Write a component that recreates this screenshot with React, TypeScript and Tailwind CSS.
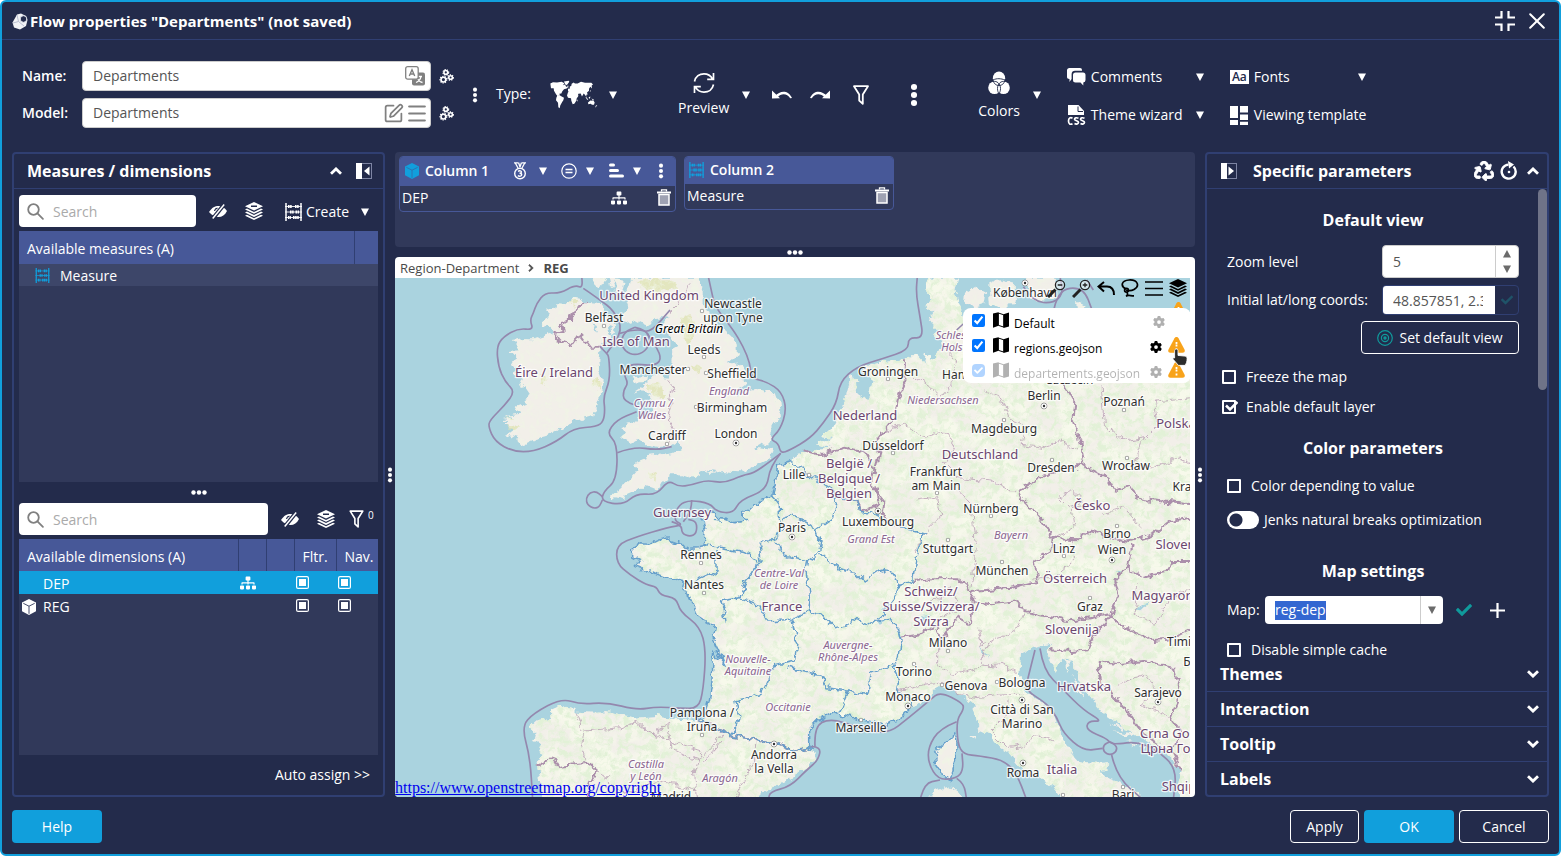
import React from "react";
import { FaRecycle, FaSitemap, FaChevronRight, FaCheck } from "react-icons/fa";
import { FaGear } from "react-icons/fa6";
import { SquarePen } from "lucide-react";

type P = { className?: string };

/* ---------- small icons ---------- */

const Caret = ({ className = "text-white" }: P) => (
  <svg viewBox="0 0 8 8" className={"h-2 w-2 shrink-0 " + className} fill="currentColor"><path d="M0 0.5h8L4 8z" /></svg>
);
const CaretUp = ({ className = "" }: P) => (
  <svg viewBox="0 0 8 8" className={"h-2 w-2 " + className} fill="currentColor"><path d="M0 7.5h8L4 0z" /></svg>
);
const Chevron = ({ className = "" }: P) => (
  <svg viewBox="0 0 12 8" className={"h-2 w-3 " + className} fill="none" stroke="white" strokeWidth="2.800"><path d="M1 6.800 6 1.900l5 4.900" /></svg>
);
const Cube = ({ className = "", line = "#31395a" }: P & { line?: string }) => (
  <svg viewBox="0 0 14 16" className={"h-4 w-3.5 " + className}>
    <path d="M7 0l7 3.600v8.600L7 16l-7-3.800V3.600z" fill="currentColor" />
    <path d="M1.300 4.300 7 7.200l5.700-2.900M7 7.200v7.600" fill="none" stroke={line} strokeWidth=".9" />
  </svg>
);
const DotsV = ({ className = "h-4 w-1.5" }: P) => (
  <svg viewBox="0 0 6 18" className={"shrink-0 " + className} fill="white">
    <circle cx="3" cy="3" r="2.3" /><circle cx="3" cy="9" r="2.3" /><circle cx="3" cy="15" r="2.3" />
  </svg>
);
const DotsH = () => (
  <svg viewBox="0 0 16 5" className="h-[5px] w-4" fill="white">
    <circle cx="2.5" cy="2.5" r="2.2" /><circle cx="8" cy="2.5" r="2.2" /><circle cx="13.5" cy="2.5" r="2.2" />
  </svg>
);
const Logo = () => (
  <svg viewBox="0 0 16 17" className="h-[17px] w-4">
    <path d="M5 1.500 9 .5l5 2.500 1.500 4-1.500 6-6 3.500-6-2L.5 9.500z" fill="#f1f2f5" />
    <path d="M5 2 6.500 8.500 1 10M6.500 8.500 12 13" stroke="#b9bfd0" strokeWidth="1" fill="none" />
    <circle cx="11.500" cy="6" r="3.300" fill="#232b4b" stroke="#dfe2ea" strokeWidth="1" />
  </svg>
);
const Gears = () => (
  <svg viewBox="0 0 15 15" className="h-[15px] w-[15px]" fill="none" stroke="white">
    {[[6.8, 3.4, 1.9], [4.4, 10.6, 2.4], [11.6, 8.5, 1.8]].map(([x, y, r]) => (
      <g key={x}>
        <circle cx={x} cy={y} r={r} strokeWidth="1.600" />
        <circle cx={x} cy={y} r={r + 1} strokeWidth="1.100" strokeDasharray="1.300 1.100" />
      </g>
    ))}
  </svg>
);
const Translate = () => (
  <svg viewBox="0 0 20 20" className="h-5 w-5">
    <rect x="7" y="6.500" width="13" height="13" rx="2" fill="#808080" />
    <path d="M11 10.500h6M16 10.500c-.5 3-2.500 5-5 6M12 12c1 2 3 4 5.500 4.500" stroke="white" strokeWidth="1.300" fill="none" />
    <rect x=".7" y=".7" width="12.500" height="12.500" rx="2" fill="white" stroke="#808080" strokeWidth="1.300" />
    <path d="M4.300 10 7 3.800 9.700 10M5.200 8h3.600" stroke="#808080" strokeWidth="1.400" fill="none" />
  </svg>
);
const List = () => (
  <svg viewBox="0 0 18 17" className="h-[17px] w-[18px]" stroke="#808080" strokeWidth="2.200" strokeLinecap="round"><path d="M1.200 1.500h15.600M1.200 8.500h15.600M1.200 15.500h15.600" /></svg>
);
const WorldMap = () => (
  <svg viewBox="30 46 144 86" className="h-[29px] w-12" fill="white">
    <path d="M31 56l8-4 12 1 14-2 8 4-4 6 6-2 3 6 6 3-4 3-8 2-5 6-3 7-6 1 2 5-5-1 2 4 6 2 3 3-4 0-9-6-5-6-6-10-1-8-8 0z" />
    <path d="M52 92l7-1 6 4 7 4-2 7-3 5-3 5-3 5-2 9-4-3-1-13-6-8 1-7zM72 50l14-2 2 3-6 8-4 2-4-6z" />
    <path d="M84 82l8-3 6 2 7 1 4 9 7 1-6 9-1 7-6 9-5 1-4-10-1-8-9-1-3-7z" />
    <path d="M84 79l0-7 6-1-1-5 5-3 1-6 6-4 4 3 8 0 10-5 12 3 19 0 5 5-4 3 1 9-5-5-4 6 0 6-6 5 2 6-4 1 0 6-5-7-3-3-5 9-4-9-7 1-2 8-7 2-6-11-4-2-4 2zM82 63l3-1 0 6-3 0z" />
    <path d="M136 96l5 3 4 7-4-2zM146 97l5-2-1 6-3 0zM154 101l8 3-3 2zM144 113l7-6 6 1 2-3 5 8-2 7-6 0-4-3-7 1zM168 121l4 1-7 7zM149 80l3-5 0 5zM110 106l3-2-1 7z" />
  </svg>
);
const Refresh = () => (
  <svg viewBox="0 0 22 22" className="h-[22px] w-[22px]" fill="none" stroke="white" strokeWidth="1.700">
    <path d="M1.500 9.500C2.500 4.500 6.500 1.800 11 1.800c3.700 0 6.700 1.800 8.500 5M20.500 1v6.300h-6.300M20.500 12.500c-1 5-5 7.700-9.500 7.700-3.700 0-6.700-1.800-8.500-5M1.500 21v-6.300h6.300" />
  </svg>
);
const Undo = ({ className = "" }: P) => (
  <svg viewBox="0 0 20 10" className={"h-[10px] w-5 " + className} fill="white">
    <path d="M0 .5 8 8.200 0 8.500zM3 6C8 .5 16-.5 20 8l-1.800.3C15 3 9 3 5.500 7.500z" />
  </svg>
);
const Funnel = ({ className = "h-5 w-4" }: P) => (
  <svg viewBox="0 0 16 20" className={className} fill="none" stroke="white" strokeWidth="1.800" strokeLinejoin="round">
    <path d="M1 1.200h14L9.800 9.500V18.800L6.200 15.500V9.500z" />
  </svg>
);
const Colors = () => (
  <svg viewBox="0 0 22 24" className="h-6 w-[22px]">
    <circle cx="6.500" cy="16.800" r="6.300" fill="white" /><circle cx="15.500" cy="16.800" r="6.300" fill="white" /><ellipse cx="11" cy="7.500" rx="6.200" ry="7" fill="white" />
    <g fill="none" stroke="#232b4b" strokeWidth=".9">
      <path d="M5.500 10.500c3-.8 7 2 7 7 0 2.500-.8 4-1.500 5.500M16.500 10.500c-3-.8-7 2-7 7 0 2.500.8 4 1.500 5.500M5 8.500c.5 4 3 6 6 6s5.500-2 6-6M5 9c4-2 8-1.500 12 0" />
    </g>
  </svg>
);
const Comments = () => (
  <svg viewBox="0 0 19 18" className="h-[18px] w-[19px]" fill="white">
    <path d="M2.500 0h10.500a2 2 0 0 1 2 2v.8H8A3.500 3.500 0 0 0 4.600 6v5L2.500 14V11C.8 11 0 10 0 9V2.500A2.500 2.500 0 0 1 2.500 0z" />
    <path d="M8.500 4.500H16A2.500 2.500 0 0 1 18.500 7v5A2.500 2.500 0 0 1 16.300 14.500v3L13.500 14.500h-5A2.500 2.500 0 0 1 6 12V7a2.500 2.500 0 0 1 2.500-2.500z" />
  </svg>
);
const CssDoc = () => (
  <svg viewBox="0 0 19 20" className="h-5 w-[19px]" fill="none" stroke="white" strokeWidth="1.700">
    <path d="M1 0h10.500l5.500 6v4H1z" fill="white" stroke="none" /><path d="M11 1.500V6.500h5" stroke="#232b4b" strokeWidth="1" />
    <path d="M5.500 13.300C3.500 12 1.500 13 1.500 16s2 4 4 2.700M11.500 13.300c-2-1-4-.5-4 1s4 1.500 4 3-2 2.300-4 1.300M17.500 13.300c-2-1-4-.5-4 1s4 1.500 4 3-2 2.300-4 1.300" />
  </svg>
);
const Template = () => (
  <svg viewBox="0 0 18 19" className="h-[19px] w-[18px]" fill="white">
    <path d="M0 0h8v12H0zM0 14h8v5H0zM10 0h8v6.500h-8zM10 8.500h8V14h-8zM10 15.700h8V19h-8z" />
  </svg>
);
const Compress = () => (
  <svg viewBox="0 0 20 20" className="h-5 w-5" fill="none" stroke="white" strokeWidth="2.200">
    <path d="M0 6.500h6.500V0M20 6.500h-6.500V0M0 13.500h6.500V20M20 13.500h-6.500V20" />
  </svg>
);
const Close = () => (
  <svg viewBox="0 0 16 16" className="h-4 w-4" stroke="white" strokeWidth="2" strokeLinecap="round"><path d="M1.200 1.200 14.800 14.800M14.800 1.200 1.200 14.800" /></svg>
);
const Dock = ({ open = false }: { open?: boolean }) => (
  <svg viewBox="0 0 16 16" className="h-4 w-4">
    <rect x=".5" y=".5" width="15" height="15" fill="none" stroke="#7d84a3" strokeWidth="1" />
    <path d="M0 0h6v16H0z" fill="white" /><path d={open ? "M7.500 3.500v9L13 8z" : "M13.500 3.500v9L8 8z"} fill="white" />
  </svg>
);
const SearchIcon = () => (
  <svg viewBox="0 0 17 17" className="h-[17px] w-[17px] shrink-0" fill="none" stroke="#808080" strokeWidth="1.800" strokeLinecap="round">
    <circle cx="6.500" cy="6.500" r="5.300" /><path d="m10.700 10.700 5.200 5.200" />
  </svg>
);
const Hidden = () => (
  <svg viewBox="0 0 18 15" className="h-[15px] w-[18px]">
    <path d="M0 8C3 3.500 6 2 9.500 2S15.500 3.500 18 7c-2 4-5 6-8.500 6S3 11.500 0 8z" fill="white" />
    <path d="M5.500 7a3.500 3.500 0 0 1 3-2.800" stroke="#232b4b" strokeWidth="1.200" fill="none" />
    <path d="M3.500 15 15.500 0" stroke="#232b4b" strokeWidth="4" /><path d="M3.700 14.500 15.200.5" stroke="white" strokeWidth="1.500" />
  </svg>
);
const Layers = ({ hole = true }: { hole?: boolean }) => (
  <svg viewBox="0 0 18 18" className="h-[18px] w-[18px]" fill="currentColor">
    <path fillRule="evenodd" d={hole ? "M9 0l9 4.300-9 4.300L0 4.300zM6 3.500v1.500h6V3.500z" : "M9 0l9 4.300-9 4.300L0 4.300z"} />
    <path d="M0 7.500l2-1L9 10l7-3.500 2 1-9 4.300zM0 10.600l2-1 7 3.500 7-3.500 2 1-9 4.300zM0 13.700l2-1 7 3.500 7-3.500 2 1L9 18z" />
  </svg>
);
const Abacus = ({ className = "h-[18px] w-[17px] text-white" }: P) => (
  <svg viewBox="0 0 17 18" className={className} fill="none" stroke="currentColor">
    <path d="M1 0v18M16 0v18" strokeWidth="1.500" /><path d="M0 3.500h17M0 9h17M0 14.500h17" strokeWidth=".9" />
    <path d="M3 3.500h4M10 3.500h4M5 9h4M10.500 9h3.500M3 14.500h3M8 14.500h6" strokeWidth="3.200" strokeDasharray="1.600 .5" />
  </svg>
);
const Medal = () => (
  <svg viewBox="0 0 14 18" className="h-[18px] w-3.5" fill="none" stroke="white">
    <path d="M2 .5 5 6M5.500.5 7 5M12 .5 9 6M8.500.5 7 5M1 .8h4M9 .8h4" strokeWidth="1.300" />
    <circle cx="7" cy="11.500" r="5.300" strokeWidth="1.400" />
    <path d="M5 9.300c1.500-1 3.600-.5 3.400.8-.1.900-1 1.200-1.900 1.200 1.200 0 2.200.4 2.200 1.400 0 1.500-2.300 2-3.900.9" strokeWidth="1.400" />
  </svg>
);
const EqualCircle = () => (
  <svg viewBox="0 0 16 16" className="h-4 w-4" fill="none" stroke="white"><circle cx="8" cy="8" r="7.200" strokeWidth="1.200" /><path d="M4.500 6.500h7M4.500 9.500h7" strokeWidth="1.300" /></svg>
);
const SortBars = () => (
  <svg viewBox="0 0 15 15" className="h-[15px] w-[15px]" stroke="white" strokeWidth="3" strokeLinecap="round"><path d="M1.500 2h3M1.500 7.500h7M1.500 13h12" /></svg>
);
const Trash = () => (
  <svg viewBox="0 0 14 17" className="h-[17px] w-3.5" fill="none" stroke="white">
    <rect x="2" y="5.500" width="10" height="10.500" strokeWidth="1.500" fill="#9ea1b2" /><path d="M0 3.500h14" strokeWidth="2" /><path d="M4.500 2.500V.8h5v1.700" strokeWidth="1.300" />
  </svg>
);
const Reset = () => (
  <svg viewBox="0 0 18 19" className="h-[19px] w-[18px]" fill="none" stroke="white" strokeWidth="2.400">
    <path d="M13.500 5.500A7 7 0 1 1 8.500 3.600" /><path d="M8 0l6 3.600-5 4z" fill="white" stroke="none" /><circle cx="9" cy="11" r="1.300" fill="white" stroke="none" />
  </svg>
);
const MapFold = ({ className = "" }: P) => (
  <svg viewBox="0 0 16 16" className={"h-4 w-4 shrink-0 " + className} fill="currentColor">
    <path d="M0 1.500 5.500.3v13.500L0 15.700zM10.500 2.200 16 .5v14l-5.500 1.400z" /><path d="M5.300 1 10.800 2.800v12.300L5.300 13.300z" fill="none" stroke="currentColor" strokeWidth="1" />
  </svg>
);
const Warning = () => (
  <svg viewBox="0 0 17 16" className="h-4 w-[17px]">
    <path d="M8.500 0c.9 0 1.500.4 2 1.300l6 11.300c.8 1.700 0 3.200-1.900 3.200H2.400C.5 15.800-.3 14.300.5 12.600l6-11.300C7 .4 7.600 0 8.500 0z" fill="#f8a31b" />
    <path d="M8.500 5v5M8.500 11.500v2" stroke="white" strokeWidth="1.800" strokeDasharray="2 .5" />
  </svg>
);
const Pointer = () => (
  <svg viewBox="0 0 15 17" className="h-[18px] w-4">
    <path d="M4 1c1 0 1.600.6 1.600 1.600V7l6 .6c1.700.2 2.600 1 2.600 2.500 0 3-.8 4.200-1.800 6.300H6L1 10.700c-.7-.9.5-2 1.400-1.300V2.600C2.400 1.600 3 1 4 1z" fill="#2c2c2c" stroke="white" strokeWidth=".8" />
  </svg>
);
const Magnifier = ({ plus = false }: { plus?: boolean }) => (
  <svg viewBox="0 0 19 19" className="h-[19px] w-[19px]" fill="none" stroke="#222">
    <path d="M1 18 8.500 10.500" strokeWidth="3" /><circle cx="13" cy="6" r="4.600" strokeWidth="1.300" fill="#ffffff80" />
    <path d={plus ? "M10.700 6h4.600M13 3.700v4.600" : "M10.700 6h4.600"} strokeWidth="1.300" />
  </svg>
);
const MapUndo = () => (
  <svg viewBox="0 0 18 15" className="h-[15px] w-[18px]" fill="none" stroke="black" strokeWidth="2"><path d="M7 1 1.500 5.500 7 10.500M1.500 5.500H10c4 0 7 2 7 8.500" /></svg>
);
const Lasso = () => (
  <svg viewBox="0 0 18 18" className="h-[18px] w-[18px]" fill="none" stroke="black" strokeWidth="1.700">
    <path d="M5 10C-1 7 .5 1.500 8 1c9-.5 11 6 5 9.500-3 1.700-5.500 1.500-8 .5" /><circle cx="5.500" cy="11.300" r="1.900" /><path d="M6 13.200c1 2 .5 3.300-1 4 2-1.500 4-.4 8-.4" />
  </svg>
);
const Burger = () => (
  <svg viewBox="0 0 18 15" className="h-[15px] w-[18px]" stroke="black" strokeWidth="1.500"><path d="M0 1h18M0 7.500h18M0 14h18" /></svg>
);
const RadioSquare = () => (
  <svg viewBox="0 0 13 13" className="h-[13px] w-[13px]"><rect x=".6" y=".6" width="11.800" height="11.800" rx="1.500" fill="none" stroke="white" strokeWidth="1.200" /><rect x="3" y="3" width="7" height="7" fill="white" /></svg>
);
const Target = () => (
  <svg viewBox="0 0 16 16" className="h-4 w-4" fill="none" stroke="#109a9c" strokeWidth="1.200"><circle cx="8" cy="8" r="7.300" /><circle cx="8" cy="8" r="3.600" /><circle cx="8" cy="8" r="1.100" fill="#109a9c" /></svg>
);

/* ---------- map ---------- */

const IRELAND = "M545 140 570 145 585 155 630 160 640 180 665 215 675 245 655 265 635 275 625 300 622 330 625 360 635 385 630 430 615 470 610 495 570 505 530 520 500 540 465 555 430 565 395 582 375 575 385 562 345 550 365 535 340 520 355 515 335 508 368 500 345 492 388 485 375 465 402 455 418 428 400 402 385 405 395 380 370 375 388 350 360 340 372 320 355 300 388 298 360 270 400 265 430 265 460 255 490 245 470 225 452 220 478 190 468 180 500 160 520 162Z";
const BRITAIN = "M718 80 712 110 700 130 712 165 695 200 715 215 735 208 760 222 790 205 822 200 838 188 822 212 808 235 845 262 860 290 843 300 845 330 840 365 830 380 790 375 768 385 765 400 725 430 760 415 776 430 792 455 785 480 760 495 725 515 688 525 702 545 690 555 712 570 740 562 770 585 800 590 835 590 866 570 872 590 845 605 820 612 800 605 765 610 760 625 735 635 740 660 715 690 690 710 665 725 660 740 700 747 705 730 740 715 765 705 800 718 815 690 840 670 870 670 905 680 940 660 970 665 1000 660 1060 665 1100 640 1140 620 1145 597 1085 590 1110 575 1130 580 1150 560 1135 545 1150 520 1170 500 1165 455 1145 425 1110 415 1075 415 1045 435 1032 425 1065 400 1055 385 1075 370 1060 355 1030 330 1008 335 1040 310 1040 280 1020 255 990 230 960 195 935 160 935 120 922 80Z";
const CONTINENT = "M1612 80 1603 110 1622 150 1603 165 1627 185 1613 210 1640 240 1630 255 1655 270 1660 290 1640 302 1620 325 1605 300 1600 335 1580 312 1545 320 1500 328 1450 335 1420 345 1420 365 1445 385 1440 420 1425 450 1400 430 1405 395 1385 380 1375 395 1360 450 1340 500 1320 540 1290 555 1325 560 1275 580 1320 590 1260 600 1220 605 1200 632 1175 638 1160 640 1155 680 1145 735 1110 750 1065 775 1055 790 1070 808 1030 815 1000 805 968 802 960 780 925 778 937 810 942 840 940 875 952 885 925 890 890 892 870 880 842 870 835 858 800 865 770 880 750 878 725 895 725 915 755 930 730 940 755 950 745 965 780 960 800 970 840 985 882 995 875 1020 895 1035 905 1060 920 1095 950 1115 970 1125 965 1150 972 1180 1003 1245 968 1200 962 1300 955 1350 940 1400 925 1410 880 1405 830 1402 800 1395 730 1400 680 1388 650 1380 620 1385 555 1382 540 1370 510 1365 480 1378 482 1400 440 1408 415 1430 435 1450 430 1470 452 1480 445 1500 455 1505 440 1530 445 1570 455 1650 1100 1650 1110 1625 1140 1610 1200 1585 1240 1555 1272 1530 1265 1500 1253 1490 1253 1440 1280 1410 1330 1385 1350 1392 1410 1405 1450 1415 1490 1425 1530 1400 1560 1370 1620 1340 1645 1305 1680 1315 1720 1340 1745 1360 1755 1400 1765 1440 1800 1455 1830 1490 1860 1510 1890 1550 1960 1590 1990 1605 2020 1650 2262 1650 2240 1620 2150 1582 2132 1562 2152 1545 2140 1535 2100 1535 2062 1530 2030 1490 2000 1430 1985 1385 1960 1360 1905 1320 1892 1300 1885 1260 1890 1210 1935 1188 1980 1178 1970 1210 1995 1260 2010 1230 2030 1215 2045 1240 2070 1300 2100 1340 2140 1390 2200 1430 2260 1470 2310 1495 2350 1530 2372 1560 2362 1600 2370 1650 2430 1650 2430 300 1760 300 1725 215 1703 160 1690 120 1698 80Z";
const ISLANDS = "M1690 1438 1698 1470 1697 1520 1685 1560 1675 1587 1650 1568 1635 1530 1632 1505 1650 1480 1686 1465ZM1605 1650 1630 1620 1670 1603 1700 1620 1712 1650ZM1725 125 1755 108 1785 125 1780 160 1745 170 1722 155ZM1795 100 1830 85 1872 95 1868 150 1840 180 1800 165ZM1905 80 1990 80 2000 115 1985 145 1940 150 1915 135ZM2052 150 2080 165 2078 182 2055 172ZM600 80 640 82 625 112 608 95ZM672 85 700 90 692 125 675 118ZM728 378 765 375 762 395 740 398ZM1370 370 1385 378 1380 390ZM650 60 680 75 660 110ZM2022 1215 2040 1232 2025 1260ZM2040 1270 2060 1300 2085 1345 2060 1320ZM2150 1415 2200 1430 2195 1436ZM2165 1440 2230 1450 2225 1458ZM2200 1470 2270 1485 2265 1492ZM1735 1455 1760 1455 1755 1465ZM945 655 970 660 958 672Z";

const LAKES = "M1395 395 1425 400 1415 440 1398 425ZM2225 1075 2260 1060 2285 1050 2250 1078ZM1590 1095 1612 1092 1600 1108ZM1770 1180 1782 1200 1790 1230 1778 1205ZM1460 1112 1490 1103 1500 1106 1468 1122ZM605 220 618 225 612 240ZM650 225 665 230 668 260 655 250ZM2180 965 2190 960 2192 975Z";

const COUNTRY = [
  "585 155 545 180 535 205 510 220 515 235 490 243 510 270 545 285 570 250 600 290 630 290",
  "1235 598 1290 612 1360 590 1420 600 1450 650 1440 700 1480 750 1475 790 1500 820",
  "1542 325 1540 400 1520 450 1510 500 1480 540 1455 570 1465 610 1455 645",
  "1340 740 1400 745 1410 780 1465 760 1450 700",
  "1565 990 1620 985 1700 985 1745 1020 1860 1010 1940 990 1930 930 1980 900 1985 860",
  "1985 860 1950 800 1890 740 1880 720 1950 680 2000 660 2060 650 2075 630",
  "2010 380 2050 450 2045 500 2060 550 2075 620 2070 640 2150 680 2170 720 2220 700 2240 740 2300 750 2400 760",
  "1985 860 2060 865 2090 840 2160 860 2220 870 2290 850 2340 810 2400 800",
  "2225 880 2210 950 2170 990 2180 1040 2160 1090 2050 1110 1900 1080 1880 1050 1800 1060 1740 1050 1745 1020",
  "1525 1160 1590 1150 1640 1120 1650 1170 1700 1100 1740 1120 1745 1050",
  "1980 1195 2040 1200 2090 1195 2110 1150 2160 1095 2220 1140 2290 1170 2340 1165 2400 1135",
  "2210 945 2260 980 2330 965 2340 930 2400 930",
  "2330 1500 2250 1440 2200 1370 2130 1290 2120 1230 2180 1240 2260 1230 2350 1250 2370 1330 2340 1400 2370 1440 2345 1500 2370 1560",
  "440 1545 485 1520 500 1545 590 1535 620 1560 600 1590 590 1650",
  "925 1410 1000 1440 1030 1455 1095 1465 1150 1475 1210 1500 1265 1490",
];
const PROVINCE = [
  "905 90 890 105 860 160 835 185", "830 385 855 415 835 430 840 460 830 495 845 540 840 575",
  "1655 280 1700 330 1680 400 1650 440 1620 410 1570 380", "1480 540 1540 520 1600 560 1660 540 1690 590 1660 640 1700 680 1800 690 1870 720",
  "1780 420 1830 440 1850 500 1900 530 1890 580 1960 590 2010 570 2060 600", "1580 750 1640 740 1650 800 1600 850 1570 900",
  "1690 700 1740 760 1750 850 1755 900 1740 1010", "2130 400 2140 520 2200 570 2260 560 2300 520 2290 450 2400 440", "2260 560 2230 640 2300 650 2360 620 2400 640",
  "1990 860 2050 830 2040 770 2100 760 2140 790 2200 770 2250 830", "2000 740 2050 720 2080 750 2030 770 2000 740",
  "1640 1180 1640 1240 1680 1270 1760 1250 1830 1240 1880 1265", "1790 1180 1770 1240 1820 1250", "1520 1320 1600 1300 1660 1290 1700 1330 1760 1340 1850 1330 1900 1330",
  "1850 1340 1840 1400 1800 1440 1850 1490 1900 1480 1940 1450 1990 1470", "1900 1080 1880 1130 1830 1160 1770 1180 1760 1130", "1620 1060 1680 1010 1700 1080 1650 1100",
  "2050 865 2050 930 1990 980 1930 980", "2240 1000 2230 1080 2290 1120 2340 1040 2400 1010", "2180 1300 2260 1270 2300 1320 2250 1360 2340 1400",
  "555 1382 575 1440 570 1480 585 1540", "580 1440 690 1430 740 1410 780 1450 830 1420 840 1490 920 1530 960 1490 1000 1440", "730 1410 770 1440 840 1470 930 1500 910 1560 920 1650", "1095 1465 1090 1540 1050 1600 1030 1650", "620 1560 700 1630 800 1590 920 1620", "940 1530 990 1470",
];
const REGION = [
  "1145 735 1165 760 1165 800 1175 830 1155 860 1105 880", "1155 870 1180 915 1250 930 1245 960 1255 1040 1250 1080 1200 1105 1130 1110 1100 1060 1050 1040 1065 990 1110 930 1105 880",
  "1175 800 1210 790 1260 820 1270 840 1290 870 1280 910 1250 930", "1200 632 1240 650 1260 680 1300 700 1330 720 1335 750 1325 800 1270 840",
  "1340 740 1400 745 1410 785 1440 785 1500 820 1600 845 1580 900 1570 950 1565 990 1530 1000", "1285 910 1340 950 1400 970 1420 990 1470 955 1500 960 1530 1000 1510 1040 1480 1080 1460 1110 1500 1105 1520 1130 1530 1170 1525 1220 1510 1250 1525 1290 1520 1320 1550 1340 1570 1365",
  "1250 1080 1300 1100 1330 1130 1370 1125 1380 1105 1440 1120 1460 1100", "1200 1105 1220 1170 1210 1230 1150 1245 1110 1330 1035 1350 1045 1400 1025 1450",
  "1190 1250 1250 1265 1290 1270 1310 1310 1370 1320 1350 1370 1340 1390", "1370 1320 1430 1330 1440 1270 1510 1240", "975 900 975 960 920 985 895 1000", "940 880 1060 905 1105 930", "1005 1115 1000 1070 990 1050 1050 1040",
  "925 1410 1000 1440 1030 1455 1095 1465 1150 1475 1210 1500 1265 1490",
  "1200 632 1175 638 1160 640 1155 680 1145 735 1110 750 1065 775 1055 790 1070 808 1030 815 1000 805 968 802 960 780 925 778 937 810 942 840 940 875 952 885 925 890 890 892 870 880 842 870 835 858 800 865 770 880 750 878 725 895 725 915 755 930 730 940 755 950 745 965 780 960 800 970 840 985 882 995 875 1020 895 1035 905 1060 920 1095 950 1115 970 1125 965 1150 972 1180 1003 1245 968 1200 962 1300 955 1350 940 1400 925 1410",
  "1265 1500 1253 1490 1253 1440 1280 1410 1330 1385 1350 1392 1410 1405 1450 1415 1490 1425 1530 1400 1560 1370", "1690 1438 1698 1470 1697 1520 1685 1560 1675 1587 1650 1568 1635 1530 1632 1505 1650 1480 1686 1465 1690 1438",
];
const MARINE = [
  "575 80 580 115 555 105 510 130 465 128 440 160 430 190 420 210 430 240 385 235 340 260 320 290 325 350 345 395 375 425 345 465 300 510 295 530 315 575 370 605 430 605 500 575 550 535 620 530 640 515 645 480 640 440 660 390 657 320 650 310 630 290",
  "580 115 595 125 630 150 670 180 700 240 650 310", "690 250 740 235 780 250 840 180", "735 232 770 240 782 275 765 305 735 316 705 305 692 275 705 245 735 232",
  "955 80 968 140 975 170 1030 240 1060 290 1080 340 1085 385 1130 395 1175 425 1190 480 1170 540 1140 568 1165 580 1172 610 1200 600 1260 565 1300 520 1340 460 1350 395 1400 350 1480 325 1555 300 1555 262 1600 265 1590 200 1578 130 1582 80",
  "1172 610 1140 635 1090 670 1060 675 1000 700 950 690 905 705 865 710 835 690 800 735 740 730 700 765 635 755 640 725 680 690 682 580 650 550 680 510 740 485", "735 465 700 455 700 420 715 400 700 370 720 340 790 348 815 330 800 290 770 250", "682 608 730 590 800 600 845 590",
  "637 750 630 770 612 776 592 765 588 745 600 727 620 725 637 740", "1172 610 1140 650 1130 720 1050 750 1030 790 980 785 960 760 900 750 865 765 850 810 880 825 835 832 740 860 680 885 680 940 720 975 770 1005 800 1010 810 1035 860 1045 870 1085 930 1130 948 1200 940 1320 925 1375 870 1375 800 1370 740 1380 650 1357 570 1363 515 1345 430 1390 395 1430 420 1520 428 1650",
  "905 750 905 780 880 815", "845 815 875 825 875 850 900 860 920 850 920 815 895 808", "1265 1490 1293 1490 1285 1530 1250 1560 1200 1610 1140 1625 1135 1650", "1275 1490 1272 1430 1320 1405 1400 1430 1490 1455 1560 1400 1620 1350 1650 1325 1720 1360 1720 1380 1700 1410 1703 1480 1720 1513 1770 1518 1840 1530 1880 1570 1910 1650",
  "1700 1415 1650 1435 1615 1490 1615 1540 1645 1590 1700 1585 1720 1560 1716 1510", "1590 1650 1602 1600 1650 1590", "1700 1585 1722 1600 1730 1650",
  "1950 1195 1960 1260 2020 1320 2080 1380 2138 1415 2095 1412 2088 1440 2150 1465 2160 1480 2180 1482 2240 1475 2300 1500 2360 1555 2350 1650", "1935 1200 1915 1280 1905 1320 1970 1360 2000 1400 2020 1450 2080 1503 2138 1495", "2160 1475 2180 1485 2180 1505 2160 1516 2140 1505 2140 1485 2160 1475", "2165 1515 2180 1580 2260 1650",
  "1900 110 1930 155 1990 160 2020 130 2010 80", "1990 190 2000 120 2080 110 2110 190", "2110 120 2090 90", "1700 240 1740 200 1800 190",
];

/* Turns a list of points into a path with rounded corners. */
function smooth(points: string) {
  const n = points.split(" ").map(Number);
  let d = "M" + n[0] + " " + n[1];
  for (let i = 2; i < n.length - 2; i += 2) {
    d += "Q" + n[i] + " " + n[i + 1] + " " + (n[i] + n[i + 2]) / 2 + " " + (n[i + 1] + n[i + 3]) / 2;
  }
  return d + "L" + n[n.length - 2] + " " + n[n.length - 1];
}

type Label = [number, number, string];
const CITIES: Label[] = [
  [604, 322, "Belfast"], [733, 308, "Newcastle"], [733, 322, "upon Tyne"], [704, 354, "Leeds"], [653, 374, "Manchester"], [732, 378, "Sheffield"], [732, 412, "Birmingham"],
  [667, 440, "Cardiff"], [736, 438, "London"], [794, 479, "Lille"], [792, 532, "Paris"], [701, 559, "Rennes"], [704, 589, "Nantes"], [702, 717, "Pamplona /"], [702, 731, "Iruña"],
  [774, 759, "Andorra"], [774, 773, "la Vella"], [671, 801, "Madrid"], [861, 732, "Marseille"], [908, 701, "Monaco"], [914, 676, "Torino"], [966, 690, "Genova"], [948, 647, "Milano"],
  [1022, 687, "Bologna"], [1022, 714, "Città di San"], [1022, 728, "Marino"], [1023, 777, "Roma"], [1123, 799, "Bari"], [1158, 697, "Sarajevo"], [1090, 611, "Graz"], [1112, 554, "Wien"],
  [1064, 553, "Linz"], [1117, 538, "Brno"], [1002, 575, "München"], [948, 553, "Stuttgart"], [991, 513, "Nürnberg"], [878, 526, "Luxembourg"], [936, 476, "Frankfurt"], [936, 490, "am Main"],
  [1051, 472, "Dresden"], [1126, 470, "Wrocław"], [1004, 433, "Magdeburg"], [1044, 400, "Berlin"], [1124, 406, "Poznań"], [893, 450, "Düsseldorf"], [888, 376, "Groningen"], [969, 379, "Hamburg"],
  [1025, 297, "København"], [1182, 491, "Kra"], [1179, 646, "Timi"], [1187, 666, "Б"], [1070, 384, "Szczecin"],
];
const COUNTRIES: Label[] = [
  [649, 300, "United Kingdom"], [636, 346, "Isle of Man"], [554, 377, "Éire / Ireland"], [865, 420, "Nederland"], [980, 459, "Deutschland"], [849, 468, "België /"], [849, 483, "Belgique /"], [849, 498, "Belgien"],
  [1092, 510, "Česko"], [682, 517, "Guernsey"], [782, 611, "France"], [1075, 583, "Österreich"], [931, 596, "Schweiz/"], [931, 611, "Suisse/Svizzera/"], [931, 626, "Svizra"],
  [1072, 634, "Slovenija"], [1084, 691, "Hrvatska"], [1062, 774, "Italia"], [1176, 428, "Polska"], [1186, 549, "Slovensko"], [1175, 600, "Magyarország"], [1171, 738, "Crna Gora"], [1173, 753, "Црна Гора"], [1187, 791, "Shqipëri"],
];
const AREAS: Label[] = [
  [729, 395, "England"], [653, 407, "Cymru /"], [652, 419, "Wales"], [943, 404, "Niedersachsen"], [961, 339, "Schleswig-"], [961, 351, "Holstein"], [1011, 539, "Bayern"], [871, 543, "Grand Est"], [779, 577, "Centre-Val"], [779, 589, "de Loire"],
  [748, 663, "Nouvelle-"], [748, 675, "Aquitaine"], [848, 649, "Auvergne-"], [848, 661, "Rhône-Alpes"], [788, 711, "Occitanie"], [646, 768, "Castilla"], [646, 780, "y León"], [720, 782, "Aragón"],
];
const TOWNS = [[604, 326], [702, 311], [704, 357], [688, 369], [706, 373], [696, 407], [667, 444], [809, 475], [701, 563], [704, 593], [702, 735], [861, 720], [914, 664], [942, 685], [948, 651], [997, 682], [1090, 598], [1064, 556], [1117, 526], [1002, 562], [948, 540], [991, 516], [937, 493], [1052, 460], [1127, 458], [1004, 420], [1124, 410], [893, 453], [888, 379], [1123, 787], [1063, 795]];
const CAPITALS = [[736, 443], [792, 537], [774, 744], [908, 706], [1022, 700], [1023, 763], [1158, 702], [1112, 560], [878, 511], [1044, 406], [1025, 283]];

function EuropeMap() {
  return (
    <svg className="block h-full w-full bg-[#aad3df]" role="img" aria-label="Map of Western Europe" fontFamily="'Noto Sans', sans-serif">
      <defs>
        <filter id="rough" x="0" y="0" width="100%" height="100%">
          <feTurbulence type="fractalNoise" baseFrequency="0.12" numOctaves="3" seed="4" result="n" />
          <feDisplacementMap in="SourceGraphic" in2="n" scale="9" xChannelSelector="R" yChannelSelector="G" />
        </filter>
        <filter id="woods" x="0" y="0" width="100%" height="100%">
          <feTurbulence type="fractalNoise" baseFrequency="0.05" numOctaves="5" seed="11" />
          <feColorMatrix values="0 0 0 0 .76  0 0 0 0 .88  0 0 0 0 .68  3.4 0 0 0 -1.4" />
          <feComposite in2="SourceGraphic" operator="in" result="w" />
          <feTurbulence type="fractalNoise" baseFrequency="0.012" numOctaves="4" seed="30" />
          <feColorMatrix values="0 0 0 0 .93  0 0 0 0 .95  0 0 0 0 .83  0 3 0 0 -1.1" />
          <feComposite in2="SourceGraphic" operator="in" result="f" />
          <feMerge><feMergeNode in="SourceGraphic" /><feMergeNode in="f" /><feMergeNode in="w" /></feMerge>
        </filter>
        <filter id="moor" x="0" y="0" width="100%" height="100%">
          <feTurbulence type="fractalNoise" baseFrequency="0.05" numOctaves="5" seed="7" />
          <feColorMatrix values="0 0 0 0 .87  0 0 0 0 .91  0 0 0 0 .78  2.6 0 0 0 -1.2" />
          <feComposite in2="SourceGraphic" operator="in" result="w" />
          <feMerge><feMergeNode in="SourceGraphic" /><feMergeNode in="w" /></feMerge>
        </filter>
      </defs>
      <g filter="url(#rough)">
        <g transform="translate(-4 -27) scale(.33333)">
          <g filter="url(#woods)"><path d={CONTINENT} fill="#f2efe9" /></g>
          <g filter="url(#moor)">
            <path d={BRITAIN + IRELAND + ISLANDS} fill="#f2efe9" />
            <path fill="#dfe3b4" opacity=".8" d="M730 90 830 85 860 110 790 130ZM870 200 900 190 915 240 890 290ZM880 260 905 270 900 300ZM770 400 810 395 820 440 780 430ZM905 350 930 350 925 375ZM770 665 800 660 790 690ZM600 390 620 385 625 420ZM440 370 470 380 460 405ZM345 500 370 500 360 510ZM350 530 385 525 370 540ZM530 150 560 150 550 165Z" />
          </g>
          <path d={LAKES} fill="#aad3df" />
          <g fill="none" strokeLinejoin="round">
            <g stroke="#b79bb2" strokeWidth="3">{PROVINCE.map((d) => <path key={d} d={"M" + d} opacity=".75" />)}</g>
            <g stroke="#ab8fab" strokeWidth="6">{COUNTRY.map((d) => <path key={d} d={"M" + d} />)}</g>
            <g stroke="#659fcb" strokeWidth="4.500">{REGION.map((d) => <path key={d} d={"M" + d} />)}</g>
          </g>
        </g>
      </g>
      <g transform="translate(-5 -28) scale(.33333)" fill="none" stroke="#9488ae" strokeWidth="5">
        {MARINE.map((d) => <path key={d} d={smooth(d)} />)}
      </g>
      <g transform="translate(-395 -278)" textAnchor="middle" stroke="#fffc" strokeWidth="2.500" strokeLinejoin="round" paintOrder="stroke">
        {TOWNS.map(([x, y]) => <circle key={x + "-" + y} cx={x} cy={y} r="1.700" fill="white" stroke="#444" strokeWidth="1" />)}
        {CAPITALS.map(([x, y]) => <g key={x + "-" + y}><circle cx={x} cy={y} r="2.800" fill="white" stroke="#444" strokeWidth="1" /><circle cx={x} cy={y} r="1.200" fill="#333" stroke="none" /></g>)}
        <g fontSize="11" fontStyle="italic" fill="#8a6590">{AREAS.map(([x, y, t]) => <text key={t} x={x} y={y}>{t}</text>)}</g>
        <g fontSize="13" fill="#6b466f">{COUNTRIES.map(([x, y, t]) => <text key={t} x={x} y={y}>{t}</text>)}</g>
        <g fontSize="12" fill="#2f2f2f">{CITIES.map(([x, y, t]) => <text key={t} x={x} y={y}>{t}</text>)}</g>
        <text x="689" y="333" fontSize="12" fontStyle="italic" fill="black">Great Britain</text>
      </g>
    </svg>
  );
}

function LayerRow({ name, on = true, warn = false, dim = false, active = false }: { name: string; on?: boolean; warn?: boolean; dim?: boolean; active?: boolean }) {
  return (
    <li className="flex h-[25px] items-start">
      <label className={"flex flex-1 items-start " + (dim ? "opacity-30" : "")}>
        <input type="checkbox" defaultChecked={on} disabled={dim} className={"mt-1.5 h-[13px] w-[13px] " + (dim ? "appearance-none rounded-sm bg-[#0075ff]" : "accent-[#0075ff]")} />
        {dim && <FaCheck className="relative -ml-[11px] mr-0.5 mt-2 h-[9px] w-[9px] text-white" />}
        <MapFold className="ml-2 mt-1" />
        <span className="ml-[5px] mt-1.5 text-xs leading-5">{name}</span>
      </label>
      <FaGear className={"mt-2 h-3 w-3 " + (active ? "text-black" : "text-[#b0b0b0]") + (warn ? "" : " mr-5")} />
      {warn && <span className="ml-1.5 mt-1"><Warning /></span>}
    </li>
  );
}

/* ---------- left panel ---------- */

const iconBtn = "flex items-center justify-center";

function SearchBox({ id, className }: { id: string; className: string }) {
  return (
    <label htmlFor={id} className={"flex h-8 items-center gap-[9px] rounded bg-white pl-2 " + className}>
      <SearchIcon />
      <input id={id} type="search" placeholder="Search" className="w-full min-w-0 bg-transparent pt-px text-sm text-[#444] outline-none placeholder:text-[#aaa]" />
    </label>
  );
}

function DimRow({ name, selected, cube, tree }: { name: string; selected?: boolean; cube?: boolean; tree?: boolean }) {
  return (
    <tr className={"h-[23px] " + (selected ? "bg-[#119fdc]" : "")}>
      <td className="p-0 pt-0.5"><span className="flex items-center"><span className="flex w-6 justify-start pl-[3px]">{cube && <Cube />}</span>{name}</span></td>
      <td className="p-0">{tree && <FaSitemap className="ml-0.5 h-4 w-4" />}</td>
      <td />
      <td className="p-0 pl-0.5"><RadioSquare /></td>
      <td className="p-0 pl-0.5"><RadioSquare /></td>
    </tr>
  );
}

function MeasuresPanel() {
  return (
    <section className="flex w-[373px] shrink-0 flex-col overflow-hidden rounded border-2 border-[#303f72]">
      <header className="flex h-[35px] shrink-0 items-center border-b border-[#303f72] pb-px pl-[13px] pr-[11px]">
        <h2 className="flex-1 text-base font-bold">Measures / dimensions</h2>
        <button aria-label="Collapse" className={iconBtn}><Chevron /></button>
        <button aria-label="Hide panel" className={iconBtn + " ml-3.5"}><Dock /></button>
      </header>
      <div className="flex min-h-0 flex-1 flex-col px-[5px] pt-1.5">
        <div className="flex h-8 shrink-0 items-center">
          <SearchBox id="search-measures" className="w-[177px]" />
          <button aria-label="Show hidden" className={iconBtn + " ml-[13px]"}><Hidden /></button>
          <button aria-label="Group" className={iconBtn + " ml-[18px]"}><Layers /></button>
          <button className="ml-[22px] flex items-center gap-1 pt-px text-sm"><Abacus /> Create <Caret className="ml-2 text-white" /></button>
        </div>
        <div className="mt-1 min-h-0 flex-[251_1_0%] overflow-hidden bg-[#31395a]">
          <table className="w-full table-fixed border-collapse text-sm">
            <thead>
              <tr className="h-[33px] bg-[#475898] text-left">
                <th className="border-r border-[#303f72] p-0 pl-2 pt-0.5 font-normal">Available measures (A)</th><th className="w-6" />
              </tr>
            </thead>
            <tbody>
              <tr className="h-[22px] bg-[#3d4669]"><td colSpan={2} className="p-0"><span className="flex h-[22px] items-center gap-2.5 pl-4 pt-px"><Abacus className="h-[15px] w-[15px] text-[#119fdc]" />Measure</span></td></tr>
            </tbody>
          </table>
        </div>
        <div className="flex h-[21px] shrink-0 items-center justify-center"><DotsH /></div>
        <div className="flex h-8 shrink-0 items-center">
          <SearchBox id="search-dimensions" className="w-[249px]" />
          <button aria-label="Show hidden" className={iconBtn + " ml-[13px]"}><Hidden /></button>
          <button aria-label="Group" className={iconBtn + " ml-[18px]"}><Layers /></button>
          <button aria-label="Filter" className="ml-3.5 flex items-center gap-1"><Funnel className="h-[18px] w-[15px]" /><span className="-mt-2 text-[10px] leading-3">0</span></button>
        </div>
        <div className="mt-1 min-h-0 flex-[216_1_0%] overflow-hidden bg-[#31395a]">
          <table className="w-full table-fixed border-collapse text-sm">
            <thead>
              <tr className="h-8 bg-[#475898] text-left">
                <th className="border-r border-[#303f72] p-0 pl-2 pt-[3px] font-normal">Available dimensions (A)</th>
                <th className="w-7 border-r border-[#303f72]" /><th className="w-7 border-r border-[#303f72]" />
                <th className="w-[42px] border-r border-[#303f72] p-0 pl-2 pt-[3px] font-normal">Fltr.</th><th className="w-[42px] p-0 pl-2 pt-[3px] font-normal">Nav.</th>
              </tr>
            </thead>
            <tbody><DimRow name="DEP" selected tree /><DimRow name="REG" cube /></tbody>
          </table>
        </div>
        <button className="flex h-10 shrink-0 items-center self-end pr-2 text-sm">Auto assign &gt;&gt;</button>
      </div>
    </section>
  );
}

/* ---------- right panel ---------- */

function Check({ label, checked }: { label: string; checked?: boolean }) {
  return (
    <label className="flex h-[30px] items-center text-sm">
      <span className="relative flex h-3.5 w-3.5 items-center justify-center">
        <input type="checkbox" defaultChecked={checked} className="absolute inset-0 appearance-none rounded-[1px] border-2 border-white" />
        {checked && <svg viewBox="0 0 16 14" className="absolute left-0 top-0 h-3.5 w-4" fill="none" stroke="white" strokeWidth="2.500"><path d="M4 5.500 8 9.500 15.500 2" /></svg>}
      </span>
      <span className="ml-2.5">{label}</span>
    </label>
  );
}
const H3 = ({ children }: { children: React.ReactNode }) => <h3 className="flex h-8 items-center justify-center text-base font-bold">{children}</h3>;

function ParametersPanel() {
  return (
    <section className="flex w-[344px] shrink-0 flex-col overflow-hidden rounded border-2 border-[#303f72]">
      <header className="flex h-[35px] shrink-0 items-center border-b border-[#303f72] pb-px pl-3.5 pr-2">
        <button aria-label="Hide panel" className={iconBtn}><Dock open /></button>
        <h2 className="ml-4 flex-1 text-base font-bold">Specific parameters</h2>
        <button aria-label="Recycle"><FaRecycle className="h-5 w-5 stroke-white stroke-[24px]" /></button>
        <button aria-label="Reset" className="ml-1.5"><Reset /></button>
        <button aria-label="Collapse" className="ml-[9px]"><Chevron /></button>
      </header>
      <div className="relative min-h-0 flex-1 overflow-hidden pl-5 pr-7">
        <div className="absolute right-0 top-0 h-[201px] w-[9px] rounded-full bg-[#6f7388]" />
        <div className="pt-[15px]"><H3>Default view</H3></div>
        <div className="mt-[9px] flex h-[33px] items-center">
          <label htmlFor="zoom" className="flex-1 text-sm">Zoom level</label>
          <div className="flex h-full w-[137px] overflow-hidden rounded border border-[#ccc] bg-white">
            <input id="zoom" defaultValue="5" className="w-[112px] min-w-0 pl-2.5 text-sm text-[#555] outline-none" />
            <span className="flex flex-1 flex-col items-center justify-center gap-[7px] border-l border-[#ccc] text-[#6b6b6b]">
              <button aria-label="Zoom up"><CaretUp className="block" /></button><button aria-label="Zoom down"><Caret className="block" /></button>
            </span>
          </div>
        </div>
        <div className="mt-[7px] flex h-[30px] items-center">
          <label htmlFor="coords" className="flex-1 text-sm">Initial lat/long coords:</label>
          <div className="flex h-full w-[137px] overflow-hidden rounded border border-[#303f72]">
            <input id="coords" defaultValue="48.857851, 2.35" className="w-[112px] min-w-0 border-r-[12px] border-white bg-white pl-2.5 pt-px text-sm text-[#555] outline-none" />
            <button aria-label="Apply coordinates" className="flex flex-1 items-center justify-center text-[#1f5368]"><FaCheck className="h-3 w-3" /></button>
          </div>
        </div>
        <div className="mt-1.5 flex justify-end">
          <button className="flex h-[33px] w-[158px] items-center justify-center gap-1.5 rounded border border-white text-sm"><Target />Set default view</button>
        </div>
        <div className="-ml-[5px] mt-2"><Check label="Freeze the map" /><Check label="Enable default layer" checked /></div>
        <div className="mt-[10px]"><H3>Color parameters</H3></div>
        <div className="mt-[7px]"><Check label="Color depending to value" /></div>
        <label className="mt-1 flex h-[30px] items-center gap-[5px] text-sm">
          <input type="checkbox" role="switch" className="h-[18px] w-8 appearance-none rounded-full bg-white bg-[radial-gradient(circle_at_9px_9px,#232b4b_6px,transparent_7px)]" />
          Jenks natural breaks optimization
        </label>
        <div className="mt-5"><H3>Map settings</H3></div>
        <div className="mt-[9px] flex h-7 items-center">
          <label htmlFor="mapname" className="w-[38px] text-sm">Map:</label>
          <div className="flex h-full w-[178px] items-center overflow-hidden rounded bg-white">
            <div className="relative flex h-full w-[155px] items-center">
              <span className="absolute left-2.5 h-[19px] w-[51px] bg-[#3367d1]" />
              <input id="mapname" defaultValue="reg-dep" className="relative w-full bg-transparent pl-2.5 text-sm text-white outline-none" />
            </div>
            <button aria-label="Choose map" className="flex h-full flex-1 items-center justify-center border-l border-[#ccc] text-[#6b6b6b]"><Caret className="" /></button>
          </div>
          <button aria-label="Confirm" className="ml-[13px] text-[#109a9c]"><FaCheck className="h-4 w-4" /></button>
          <button aria-label="Add" className="ml-[18px]"><svg viewBox="0 0 15 15" className="h-[15px] w-[15px]" stroke="white" strokeWidth="2.200"><path d="M7.500 0v15M0 7.500h15" /></svg></button>
        </div>
        <div className="mt-[11px]"><Check label="Disable simple cache" /></div>
      </div>
      {["Themes", "Interaction", "Tooltip", "Labels"].map((t, i) => (
        <button key={t} className={"flex shrink-0 items-center justify-between pl-[13px] pr-2 text-base font-bold " + (i < 3 ? "h-[35px] border-b border-[#303f72] pb-px" : "h-[33px]")}>
          {t}<Chevron className="rotate-180" />
        </button>
      ))}
    </section>
  );
}

/* ---------- centre ---------- */

function Workspace() {
  return (
    <div className="flex min-w-0 flex-1 flex-col">
      <div className="flex h-[95px] shrink-0 items-start gap-2 rounded bg-[#31395a] p-1">
        <article className="w-[277px] overflow-hidden rounded border border-[#475898]">
          <header className="flex h-[29px] items-center bg-[#475898] pb-0.5 pl-[5px] pr-[11px]">
            <Cube className="text-[#119fdc]" line="#2f6fae" />
            <h3 className="ml-1.5 flex-1 text-sm font-semibold">Column 1</h3>
            <button aria-label="Rank" className="flex items-center gap-3"><Medal /><Caret /></button>
            <button aria-label="Format" className="ml-3.5 flex items-center gap-[9px]"><EqualCircle /><Caret /></button>
            <button aria-label="Sort" className="ml-[15px] flex items-center gap-[9px]"><SortBars /><Caret /></button>
            <button aria-label="More" className="ml-[17px]"><DotsV className="block h-4 w-1.5" /></button>
          </header>
          <div className="flex h-[25px] items-center pb-0.5 pl-[2px] pr-1 text-sm">
            <span className="flex-1">DEP</span><FaSitemap className="mr-[30px] h-4 w-4" /><button aria-label="Remove DEP"><Trash /></button>
          </div>
        </article>
        <article className="w-[210px] overflow-hidden rounded border border-[#475898]">
          <header className="flex h-[27px] items-center gap-1.5 bg-[#475898] pb-0.5 pl-1"><Abacus className="h-4 w-[15px] text-[#119fdc]" /><h3 className="text-sm font-semibold">Column 2</h3></header>
          <div className="flex h-[25px] items-center pb-0.5 pl-[2px] pr-1 text-sm"><span className="flex-1">Measure</span><button aria-label="Remove Measure"><Trash /></button></div>
        </article>
      </div>
      <div className="flex h-[10px] shrink-0 items-center justify-center"><DotsH /></div>
      <div className="flex min-h-0 flex-1 flex-col overflow-hidden rounded bg-white">
        <nav className="flex h-[21px] shrink-0 items-center pl-[5px] pt-px text-[13px] leading-5 text-[#4a4a4a]" aria-label="Breadcrumb">
          <a href="#region">Region-Department</a><FaChevronRight className="mx-2 h-2 w-2 stroke-[#4a4a4a] stroke-[50px]" /><span className="font-bold">REG</span>
        </nav>
        <div className="relative min-h-0 flex-1 pr-[5px]">
          <EuropeMap />
          <div className="absolute right-2 top-0 flex h-5 items-center gap-1.5 text-black">
            <button aria-label="Zoom out"><Magnifier /></button><button aria-label="Zoom in"><Magnifier plus /></button><button aria-label="Back"><MapUndo /></button>
            <button aria-label="Lasso"><Lasso /></button><button aria-label="Menu"><Burger /></button><button aria-label="Layers"><Layers hole={false} /></button>
          </div>
          <span className="absolute right-2 top-6"><Warning /></span>
          <ul className="absolute right-1 top-[30px] w-[228px] rounded-lg bg-white pl-[9px] pr-1.5 text-black">
            <LayerRow name="Default" /><LayerRow name="regions.geojson" warn active /><LayerRow name="departements.geojson" warn dim />
          </ul>
          <span className="absolute right-[7px] top-[70px]"><Pointer /></span>
          <a href="https://www.openstreetmap.org/copyright" className="absolute bottom-0 left-0 font-['Liberation_Serif',serif] text-base leading-[18px] text-[#0000ee] underline">https://www.openstreetmap.org/copyright</a>
        </div>
      </div>
    </div>
  );
}

/* ---------- page ---------- */

function Toolbar() {
  return (
    <div className="flex h-[112px] shrink-0 items-center pb-[3px] pl-5 text-sm">
      <div className="flex flex-col gap-[7px]">
        <div className="flex h-[30px] items-center">
          <label htmlFor="name" className="w-[60px] pb-px font-semibold">Name:</label>
          <div className="flex h-full w-[349px] items-center rounded border border-[#ccc] bg-white pr-[5px]"><input id="name" defaultValue="Departments" className="min-w-0 flex-1 pl-2.5 text-[#555] outline-none" /><Translate /></div>
          <button aria-label="Name options" className="ml-2"><Gears /></button>
        </div>
        <div className="flex h-[30px] items-center">
          <label htmlFor="model" className="w-[60px] pb-px font-semibold">Model:</label>
          <div className="flex h-full w-[349px] items-center rounded border border-[#ccc] bg-white pr-1 text-[#808080]"><input id="model" defaultValue="Departments" className="min-w-0 flex-1 pl-2.5 text-[#555] outline-none" /><SquarePen className="h-[21px] w-[21px]" /><span className="ml-1"><List /></span></div>
          <button aria-label="Model options" className="ml-2"><Gears /></button>
        </div>
      </div>
      <button aria-label="More" className="ml-[18px]"><DotsV /></button>
      <span className="ml-[18px] w-[54px] pb-px">Type:</span>
      <button aria-label="Flow type" className="flex items-center gap-[11px]"><WorldMap /><Caret /></button>
      <button className="ml-[61px] flex flex-col items-center gap-1"><Refresh />Preview</button>
      <button aria-label="Preview options" className="ml-[13px]"><Caret /></button>
      <button aria-label="Undo" className="ml-[22px]"><Undo /></button>
      <button aria-label="Redo" className="ml-[18px]"><Undo className="-scale-x-100" /></button>
      <button aria-label="Filter" className="ml-[23px]"><Funnel /></button>
      <button aria-label="More actions" className="ml-[41px]"><DotsV className="h-6 w-2" /></button>
      <button className="ml-[60px] flex flex-col items-center gap-1.5 pt-0.5"><Colors />Colors</button>
      <button aria-label="Color options" className="ml-[13px]"><Caret /></button>
      <div className="ml-[26px] grid grid-cols-[129px_auto_auto] gap-y-[18px] pt-[3px] leading-5">
        <button className="flex items-center gap-[5px]"><Comments />Comments</button><button aria-label="Comment options" className="mr-[26px]"><Caret /></button>
        <span className="flex items-center gap-[94px]"><button className="flex w-[34px] items-center gap-[5px] whitespace-nowrap"><span className="flex h-3.5 w-[19px] shrink-0 items-center justify-center bg-white text-xs font-semibold leading-3 text-[#232b4b]">Aa</span>Fonts</button><button aria-label="Font options"><Caret /></button></span>
        <button className="flex items-center gap-[5px]"><CssDoc />Theme wizard</button><button aria-label="Theme options" className="mr-[26px]"><Caret /></button>
        <button className="flex items-center gap-1.5"><Template />Viewing template</button>
      </div>
    </div>
  );
}

export default function App() {
  return (
    <div className="flex h-screen flex-col overflow-hidden rounded-md border-2 border-[#119fdc] bg-[#232b4b] font-['Open_Sans',sans-serif] text-white">
      <header className="flex h-[38px] shrink-0 items-center border-b border-[#303f72] pl-2.5 pr-3.5 pt-px">
        <Logo /><h1 className="ml-0.5 flex-1 text-[15px] font-bold">Flow properties "Departments" (not saved)</h1>
        <button aria-label="Restore size"><Compress /></button><button aria-label="Close" className="ml-3.5"><Close /></button>
      </header>
      <Toolbar />
      <main className="flex min-h-0 flex-1 px-2.5">
        <MeasuresPanel />
        <div className="flex w-[10px] shrink-0 items-center justify-center"><DotsV /></div>
        <Workspace />
        <div className="flex w-[10px] shrink-0 items-center justify-center"><DotsV /></div>
        <ParametersPanel />
      </main>
      <footer className="flex h-[57px] shrink-0 items-center gap-[5px] px-2.5 pt-0.5 text-sm">
        <button className="h-[33px] w-[90px] rounded bg-[#119fdc]">Help</button>
        <span className="flex-1" />
        <button className="h-[33px] w-[69px] rounded border border-white">Apply</button>
        <button className="h-[33px] w-[90px] rounded bg-[#119fdc]">OK</button>
        <button className="h-[33px] w-[90px] rounded border border-white">Cancel</button>
      </footer>
    </div>
  );
}
